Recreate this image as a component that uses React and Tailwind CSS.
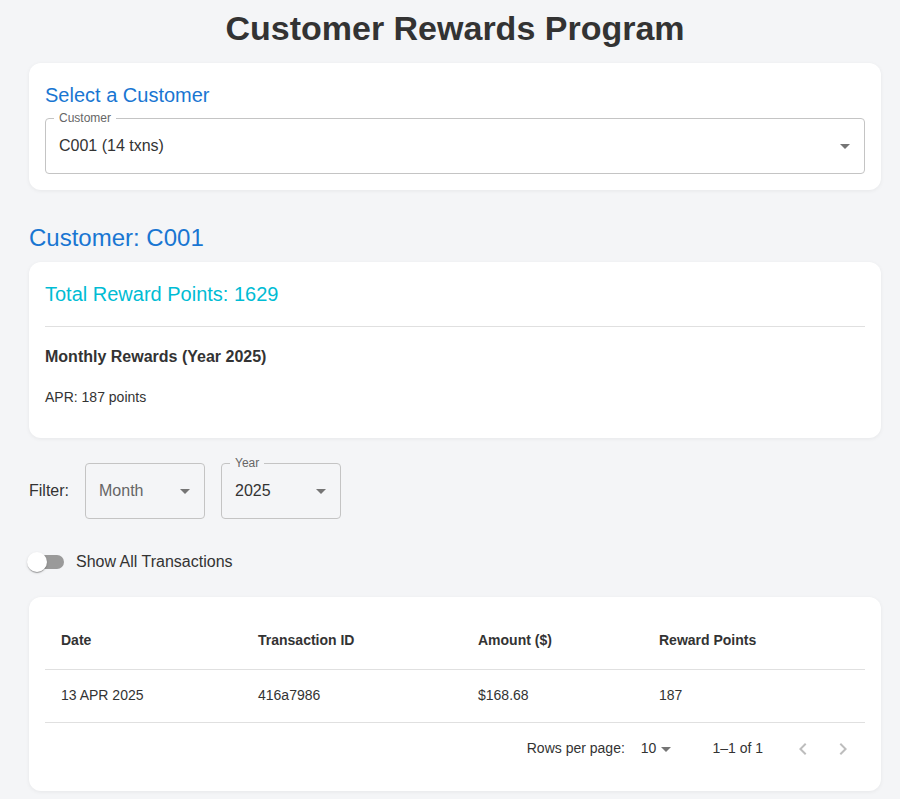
import { useState } from 'react';

const font = { fontFamily: '"Liberation Sans", Arial, Helvetica, sans-serif' };

function ArrowDrop({ className = '' }) {
  return (
    <svg viewBox="0 0 24 24" width="24" height="24" className={className} fill="currentColor">
      <path d="M7 10l5 5 5-5z" />
    </svg>
  );
}

function Chevron({ dir }) {
  return (
    <svg viewBox="0 0 24 24" width="24" height="24" fill="currentColor">
      {dir === 'left' ? (
        <path d="M15.41 7.41 14 6l-6 6 6 6 1.41-1.41L10.83 12z" />
      ) : (
        <path d="M10 6 8.59 7.41 13.17 12l-4.58 4.59L10 18l6-6z" />
      )}
    </svg>
  );
}

function OutlinedSelect({ label, value, placeholder, className = '', labelBg = 'bg-white' }) {
  return (
    <div className={`relative h-[56px] rounded-[4px] border border-[#c4c4c4] flex items-center pl-[13px] pr-[7px] ${className}`}>
      {label && (
        <span className={`absolute -top-[9px] left-[8px] px-[5px] text-[12px] leading-[16px] text-[#666] ${labelBg}`}>
          {label}
        </span>
      )}
      <span className={`flex-1 text-[16px] ${value ? 'text-[#333]' : 'text-[#666]'}`}>{value || placeholder}</span>
      <ArrowDrop className="text-[#757575]" />
    </div>
  );
}

const rows = [{ date: '13 APR 2025', id: '416a7986', amount: '$168.68', points: 187 }];

export default function App() {
  const [showAll, setShowAll] = useState(false);

  return (
    <div className="min-h-screen bg-[#f4f5f7] text-[#333]" style={font}>
      <div className="pl-[29px] pr-[19px] pb-[9px]">
        <h1 className="pt-[7px] mb-[14px] text-center text-[34px] leading-[42px] font-bold text-[#333]">
          Customer Rewards Program
        </h1>

        {/* select customer */}
        <div className="bg-white rounded-[12px] shadow-[0_1px_4px_rgba(0,0,0,0.06)] p-[16px]">
          <h2 className="text-[20px] leading-[32px] text-[#1976d2] mb-[7px]">Select a Customer</h2>
          <OutlinedSelect label="Customer" value="C001 (14 txns)" />
        </div>

        <h2 className="mt-[32px] mb-[8px] text-[24px] leading-[32px] text-[#1976d2]">Customer: C001</h2>

        <div className="bg-white rounded-[12px] shadow-[0_1px_4px_rgba(0,0,0,0.06)] px-[16px] pt-[16px] pb-[31px]">
          <div className="text-[20px] leading-[32px] text-[#00bcd4]">Total Reward Points: 1629</div>
          <div className="mt-[16px] mb-[18px] h-px bg-[#e0e0e0]" />
          <div className="text-[16px] leading-[24px] font-bold">Monthly Rewards (Year 2025)</div>
          <div className="mt-[18px] text-[14px] leading-[20px]">APR: 187 points</div>
        </div>

        {/* filters */}
        <div className="mt-[25px] flex items-center gap-[16px]">
          <span className="text-[16px]">Filter:</span>
          <OutlinedSelect placeholder="Month" className="w-[120px]" labelBg="bg-[#f4f5f7]" />
          <OutlinedSelect label="Year" value="2025" className="w-[120px]" labelBg="bg-[#f4f5f7]" />
        </div>

        <label className="mt-[24px] flex items-center h-[38px] cursor-pointer" onClick={() => setShowAll(!showAll)}>
          <span className="relative w-[58px] h-[38px] -ml-[11px] shrink-0">
            <span className="absolute left-[12px] top-[12px] w-[34px] h-[14px] rounded-full bg-[#9a9a9a]" />
            <span
              className={`absolute top-[9px] w-[20px] h-[20px] rounded-full bg-white shadow-[0_2px_1px_-1px_rgba(0,0,0,0.2),0_1px_1px_0_rgba(0,0,0,0.14),0_1px_3px_0_rgba(0,0,0,0.12)] ${showAll ? 'left-[29px]' : 'left-[9px]'}`}
            />
          </span>
          <span className="text-[16px]">Show All Transactions</span>
        </label>

        {/* table */}
        <div className="mt-[16px] bg-white rounded-[12px] shadow-[0_1px_4px_rgba(0,0,0,0.06)] p-[16px]">
          <table className="w-full border-collapse text-[14px]">
            <thead>
              <tr className="h-[56px] border-b border-[#e0e0e0] text-left">
                <th className="w-[197px] px-[16px] font-bold">Date</th>
                <th className="w-[220px] px-[16px] font-bold">Transaction ID</th>
                <th className="w-[181px] px-[16px] font-bold">Amount ($)</th>
                <th className="px-[16px] font-bold">Reward Points</th>
              </tr>
            </thead>
            <tbody>
              {rows.map((r) => (
                <tr key={r.id} className="h-[53px] border-b border-[#e0e0e0]">
                  <td className="px-[16px]">{r.date}</td>
                  <td className="px-[16px]">{r.id}</td>
                  <td className="px-[16px]">{r.amount}</td>
                  <td className="px-[16px]">{r.points}</td>
                </tr>
              ))}
            </tbody>
          </table>
          <div className="h-[52px] flex items-center justify-end text-[14px] pr-[2px]">
            <span>Rows per page:</span>
            <span className="ml-[16px] mr-[34px] flex items-center">
              10
              <ArrowDrop className="text-[#757575] -ml-[2px]" />
            </span>
            <span>1–1 of 1</span>
            <div className="ml-[20px] flex text-[#bdbdbd]">
              <button className="w-[40px] h-[40px] flex items-center justify-center"><Chevron dir="left" /></button>
              <button className="w-[40px] h-[40px] flex items-center justify-center"><Chevron dir="right" /></button>
            </div>
          </div>
        </div>
      </div>
    </div>
  );
}
